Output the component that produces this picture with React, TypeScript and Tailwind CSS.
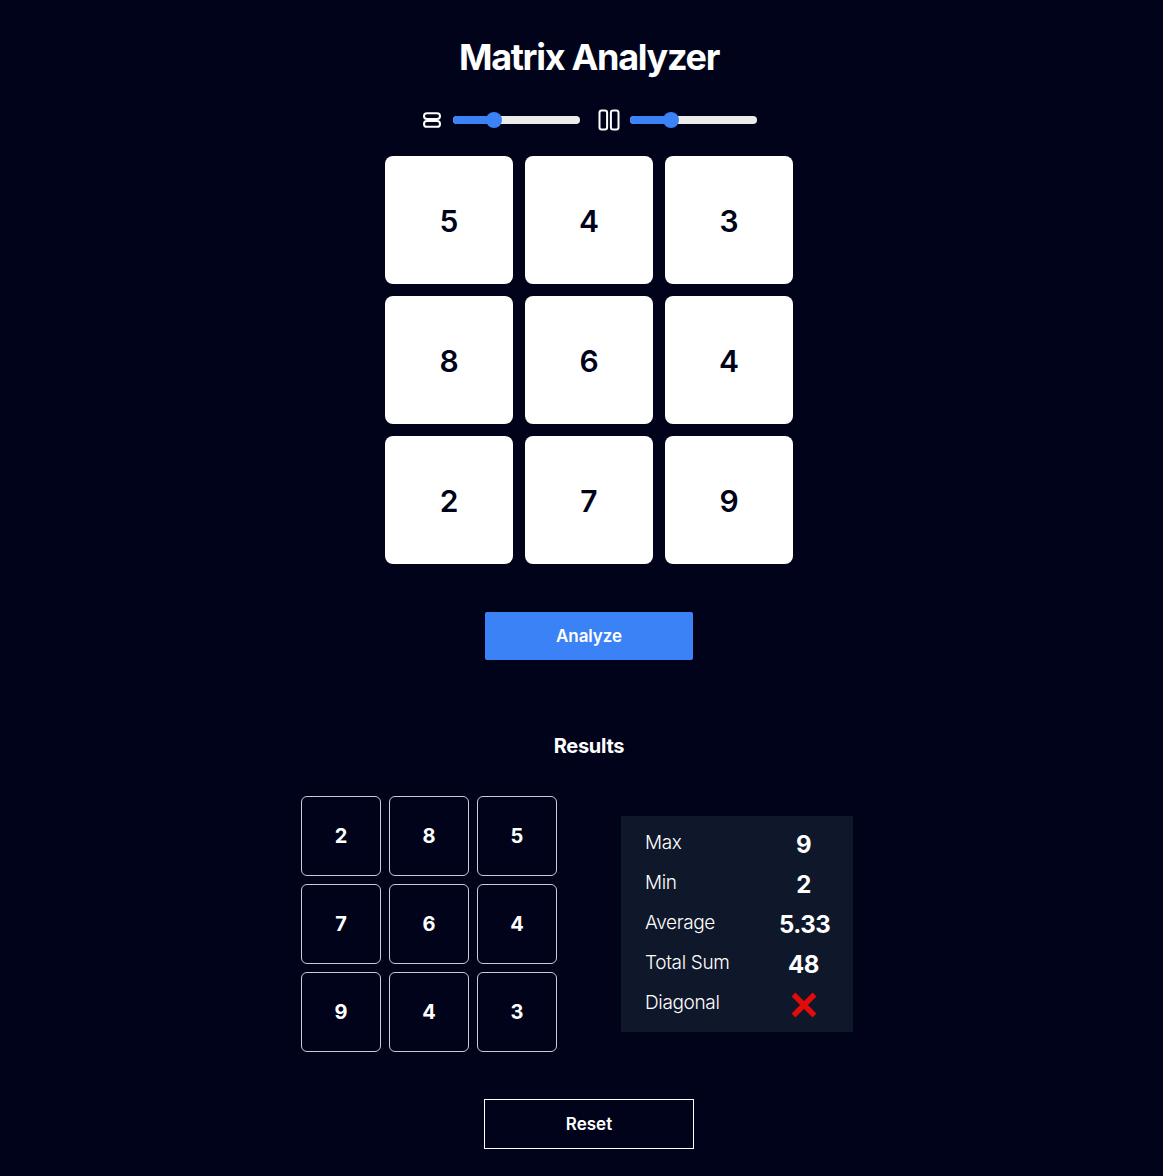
import { useState } from 'react';

const matrix = [5, 4, 3, 8, 6, 4, 2, 7, 9];
const rotated = [2, 8, 5, 7, 6, 4, 9, 4, 3];
const stats = [
  { label: 'Max', value: '9' },
  { label: 'Min', value: '2' },
  { label: 'Average', value: '5.33' },
  { label: 'Total Sum', value: '48' },
];

function RowsIcon() {
  return (
    <svg width="20" height="20" viewBox="0 0 20 20" fill="none" stroke="white" strokeWidth="2">
      <rect x="2" y="3.2" width="16" height="5.8" rx="2.9" />
      <rect x="2" y="11" width="16" height="5.8" rx="2.9" />
    </svg>
  );
}

function ColsIcon() {
  return (
    <svg width="22" height="22" viewBox="0 0 22 22" fill="none" stroke="white" strokeWidth="2">
      <rect x="1.5" y="1.5" width="7.6" height="19" rx="2.2" />
      <rect x="12.9" y="1.5" width="7.6" height="19" rx="2.2" />
    </svg>
  );
}

function Slider({ value }: { value: number }) {
  return (
    <div className="relative h-[8px] w-[127px] rounded-full bg-[#ebedeb]">
      <div className="h-full rounded-full bg-[#3b82f6]" style={{ width: value }} />
      <div className="absolute top-[-4px] h-[16px] w-[16px] rounded-full bg-[#3b82f6]" style={{ left: value - 8 }} />
    </div>
  );
}

export default function App() {
  const [cells] = useState(matrix);

  return (
    <div className="flex min-h-[1176px] flex-col items-center bg-[#00031a] pl-[15px] font-['Inter',sans-serif] text-white">
      <h1 className="mt-[36px] h-[42px] text-[36px] leading-[42px] font-bold tracking-[-1.3px]">Matrix Analyzer</h1>

      <div className="mt-[31px] flex h-[22px] items-center">
        <RowsIcon />
        <div className="ml-[11px]">
          <Slider value={41} />
        </div>
        <div className="ml-[18px]">
          <ColsIcon />
        </div>
        <div className="ml-[10px]">
          <Slider value={41} />
        </div>
      </div>

      <div className="mt-[25px] grid grid-cols-3 gap-[12px]">
        {cells.map((n, i) => (
          <div key={i} className="flex h-[128px] w-[128px] items-center justify-center rounded-[8px] bg-white pt-[2px] text-[30px] font-semibold text-[#00031a]">
            {n}
          </div>
        ))}
      </div>

      <button className="mt-[48px] h-[48px] w-[208px] rounded-[2px] bg-[#3b82f6] pt-[1px] text-[17px] font-semibold tracking-[-0.1px] text-white">Analyze</button>

      <h2 className="mt-[74px] h-[24px] text-[20px] leading-[24px] font-bold tracking-[-0.3px]">Results</h2>

      <div className="mt-[38px] mr-[24px] flex items-center gap-[64px]">
        <div className="grid grid-cols-3 gap-[8px]">
          {rotated.map((n, i) => (
            <div key={i} className="flex h-[80px] w-[80px] items-center justify-center rounded-[6px] border border-[#c9cbd6] text-[20px] font-bold">
              {n}
            </div>
          ))}
        </div>

        <div className="flex h-[216px] w-[232px] flex-col justify-center bg-[#0f172a] px-[24px]">
          {stats.map((s) => (
            <div key={s.label} className="flex h-[40px] items-center justify-between">
              <span className="pb-[2px] text-[19px] leading-[28px] font-light tracking-[-0.35px]">{s.label}</span>
              <span className="w-[50px] pt-[2px] pr-[1px] text-center text-[24px] font-bold tracking-[-0.5px] whitespace-nowrap">{s.value}</span>
            </div>
          ))}
          <div className="flex h-[40px] items-center justify-between">
            <span className="pb-[2px] text-[19px] leading-[28px] font-light tracking-[-0.35px]">Diagonal</span>
            <span className="flex w-[50px] justify-center pt-[2px]">
              <svg width="26" height="26" viewBox="0 0 26 26" fill="none" stroke="#e00b0b" strokeWidth="5.4">
                <path d="M2.5 2.5 L23.5 23.5 M23.5 2.5 L2.5 23.5" />
              </svg>
            </span>
          </div>
        </div>
      </div>

      <button className="mt-[47px] h-[50px] w-[210px] border border-white pt-[1px] text-[17px] font-semibold text-white">Reset</button>
    </div>
  );
}
